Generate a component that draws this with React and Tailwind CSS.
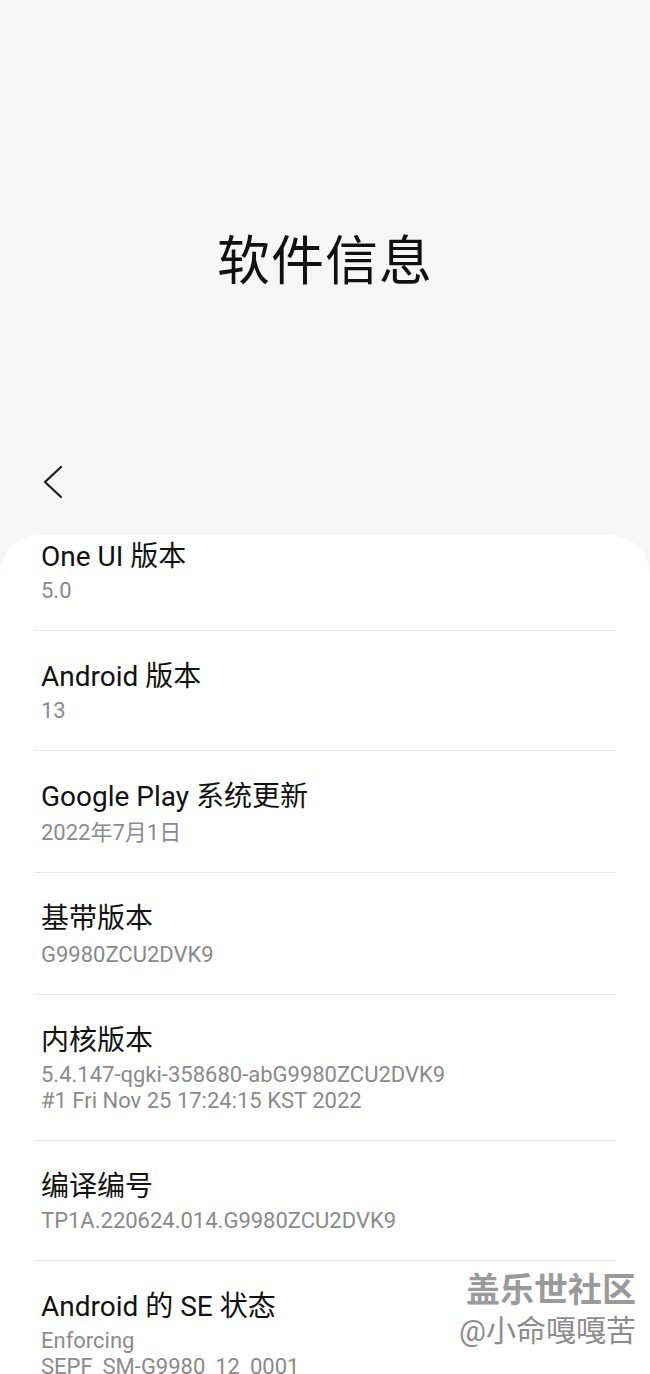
const items = [
  { title: 'One UI 版本', sub: ['5.0'], first: true },
  { title: 'Android 版本', sub: ['13'] },
  { title: 'Google Play 系统更新', sub: ['2022年7月1日'], wide: true },
  { title: '基带版本', sub: ['G9980ZCU2DVK9'], wide: true },
  { title: '内核版本', sub: ['5.4.147-qgki-358680-abG9980ZCU2DVK9', '#1 Fri Nov 25 17:24:15 KST 2022'] },
  { title: '编译编号', sub: ['TP1A.220624.014.G9980ZCU2DVK9'] },
  { title: 'Android 的 SE 状态', sub: ['Enforcing', 'SEPF_SM-G9980_12_0001'], last: true },
];

function Row({ item }) {
  return (
    <div className={`mx-[34px] px-[7px] ${item.first ? 'pt-[5px]' : 'pt-[29px]'} pb-[26px] ${item.last ? '' : 'border-b border-[#e4e4e4]'}`}>
      <div className="text-[28px] leading-[34px] text-[#111111]">{item.title}</div>
      <div className={`${item.wide ? 'mt-[6px]' : 'mt-[4px]'} text-[22px] leading-[26px] text-[#8a8a8a]`}>
        {item.sub.map((s, i) => (
          <div key={i}>{s}</div>
        ))}
      </div>
    </div>
  );
}

export default function App() {
  return (
    <div
      className="relative h-[1374px] w-[650px] overflow-hidden bg-[#f6f6f6]"
      style={{ fontFamily: 'Roboto, "Noto Sans CJK SC", sans-serif' }}
    >
      <div className="pt-[228px] text-center text-[53px] leading-[68px] tracking-[1px] text-[#111111]">
        软件信息
      </div>
      <div className="mt-[169px] h-[42px] pl-[42px]">
        <svg width="22" height="34" viewBox="0 0 22 34" fill="none">
          <polyline points="19,2 3,17 19,32" stroke="#1a1a1a" strokeWidth="2.2" strokeLinecap="round" strokeLinejoin="round" />
        </svg>
      </div>
      <div className="mt-[28px] h-[900px] rounded-t-[40px] bg-white">
        {items.map((item, i) => (
          <Row key={i} item={item} />
        ))}
      </div>
      <div className="absolute right-[14px] top-[1269px] flex flex-col items-end">
        <div
          className="text-[34px] font-bold leading-[42px] text-[#9a9a9a]"
          style={{ textShadow: '1px 1px 0 #ffffff, -1px -1px 0 #ffffff, 1px -1px 0 #ffffff, -1px 1px 0 #ffffff' }}
        >
          盖乐世社区
        </div>
        <div
          className="mt-[2px] text-[30px] leading-[36px] text-[#8c8c8c]"
          style={{ textShadow: '1px 1px 0 #ffffff, -1px -1px 0 #ffffff' }}
        >
          @小命嘎嘎苦
        </div>
      </div>
    </div>
  );
}
